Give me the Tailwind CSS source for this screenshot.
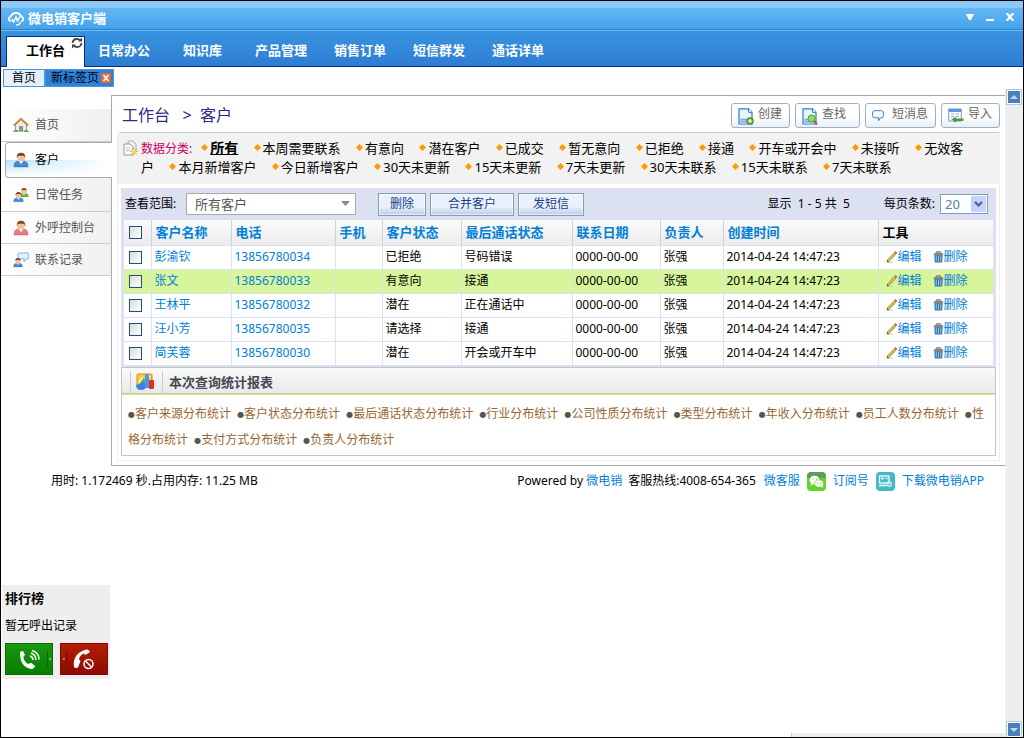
<!DOCTYPE html>
<html lang="zh-CN">

<head>
  <meta charset="UTF-8" />
  <meta name="viewport" content="width=device-width, initial-scale=1.0" />
  <title>微电销客户端</title>
  <script src="https://cdn.jsdelivr.net/npm/@tailwindcss/browser@4"></script>
</head>

<body class="h-screen flex flex-col overflow-hidden border border-black bg-white text-black text-xs font-['Noto_Sans','Noto_Sans_CJK_SC',sans-serif]">

  <!-- Icons used more than once -->
  <svg class="hidden">
    <symbol id="dot" viewBox="0 0 7 7"><path d="M3.5 0L7 3.5 3.5 7 0 3.5z" fill="#ff9900" /></symbol>
    <symbol id="pencil" viewBox="0 0 12 12">
      <path d="M1 11.5h6" stroke="#ccc" />
      <path d="M1.5 10.5L9.5 2" stroke="#8d7a2a" stroke-width="2.6" />
      <path d="M2 10L9.3 2.2" stroke="#ecd75c" stroke-width="1.3" />
      <path d="M9.2 2.3l1.3-1.4" stroke="#d8535a" stroke-width="2.4" />
      <path d="M.5 11.5l.8-2 1.2 1.2z" fill="#444" />
    </symbol>
    <symbol id="trash" viewBox="0 0 11 13">
      <path d="M3.5 2V.7h4V2" fill="none" stroke="#777" />
      <path d="M.5 4.2Q1 2 3 2h5q2 0 2.5 2.2z" fill="#8d9298" stroke="#666" stroke-width=".6" />
      <path d="M1 4.5h9L9.5 12.500h-8z" fill="#256da5" />
      <path d="M3 5.5v6M5.5 5.5v6M8 5.5v6" stroke="#b5dcf2" />
    </symbol>
    <symbol id="page" viewBox="0 0 16 17">
      <path d="M1 .8h9.5L14 4.3V16H1z" fill="#eaf4ff" stroke="#3579c6" stroke-width="1.2" />
      <path d="M10.5.8v3.5H14" fill="#fff" stroke="#3579c6" />
      <path d="M2 10.5h11v5H2z" fill="#a9cdf2" />
      <path d="M3 11.5h7M3 13.5h7" stroke="#7dabdd" />
    </symbol>
    <symbol id="man" viewBox="0 0 16 16">
      <path d="M1 15q-.5-5.5 4.5-6h5q5 .5 4.5 6z" fill="currentColor" stroke="#0003" />
      <path d="M5.5 9L8 12l2.5-3z" fill="#fff" />
      <circle cx="8" cy="5.5" r="4" fill="#f3c49a" />
      <path d="M3.7 6Q3.5.8 8 .8T12.3 6Q11.5 3.8 10 3.8H6Q4.5 3.8 3.7 6z" fill="#7b4523" />
    </symbol>
  </svg>

  <!-- Title bar -->
  <header class="shrink-0">
    <div class="h-[7px] bg-[#8cc8f8]"></div>
    <div class="h-[21px] flex items-center bg-linear-to-b from-[#63b7f3] to-[#43a3ea] pl-[7px] pr-[9px]">
      <svg class="w-4 h-4" viewBox="0 0 16 14" fill="none" stroke="#fff">
        <path d="M2.5 5Q4 1 8 1t5.5 4" stroke-width="1.8" />
        <path d="M3 4.5Q.8 5 .8 7T3 9.5M13 4.5q2.2.5 2.200 2.500T13 9.500" stroke-width="1.6" />
        <path d="M3.5 7l2 3 2.5-5 1.500 4 2.500-4.500M8 13q4 0 4.500-3" stroke-width="1.5" />
      </svg>
      <h1 class="ml-1 text-[13px] font-bold text-white">微电销客户端</h1>
      <div class="ml-auto flex gap-3">
        <button class="-mt-1" aria-label="菜单"><svg class="w-2 h-2" viewBox="0 0 8 8"><path d="M0 1h8L5 7H3z" fill="#fff" /></svg></button>
        <button class="-mt-1" aria-label="最小化"><svg class="w-2 h-2" viewBox="0 0 8 8"><path d="M0 6h8v2H0z" fill="#fff" /></svg></button>
        <button class="-mt-1" aria-label="关闭"><svg class="w-2 h-2" viewBox="0 0 8 8"><path d="M.5 0l7 8M7.500 0l-7 8" stroke="#fff" stroke-width="2.200" /></svg></button>
      </div>
    </div>
    <div class="h-px bg-[#2584d2]"></div>
    <div class="h-px bg-[#78bced]"></div>
  </header>

  <!-- Main nav -->
  <nav class="h-9 shrink-0 flex items-end border-b border-[#00317b] bg-linear-to-b from-[#3994e0] to-[#2e7dd3] pl-[5px] text-[13px] font-bold text-white">
    <a href="#" class="relative -mb-px w-[79px] h-[31px] border border-b-0 border-[#00317b] bg-white pl-[19px] leading-[26px] text-black">工作台
      <svg class="absolute right-px top-0 w-3 h-3" viewBox="0 0 12 12" fill="none" stroke="#444" stroke-width="1.8">
        <path d="M1.5 6Q2 2 6 2q2 0 3.500 1.500M10.500 6Q10 10 6 10q-2 0-3.500-1.500" />
        <path d="M11 .5V4.500H7zM1 11.500V7.500h4z" fill="#444" stroke="none" />
      </svg>
    </a>
    <div class="flex gap-[27px] pl-[13px] leading-[28px] pb-0.5">
      <a href="#" class="mr-[6px]">日常办公</a>
      <a href="#" class="mr-[6px]">知识库</a>
      <a href="#">产品管理</a>
      <a href="#">销售订单</a>
      <a href="#">短信群发</a>
      <a href="#">通话详单</a>
    </div>
  </nav>

  <!-- Page tabs -->
  <div class="h-[22px] shrink-0 flex items-start pt-0.5 pl-0.5 leading-4">
    <a href="#" class="border border-[#4a98dc] bg-[#e4effd] px-2">首页</a>
    <span class="flex items-center border border-[#4a98dc] bg-[#2f82d9] pl-[5px] pr-0.5">新标签页
      <button class="ml-0.5" aria-label="关闭标签">
        <svg class="w-[10px] h-[10px]" viewBox="0 0 10 10"><path d="M0 0h10v10H0z" fill="#f2662b" /><path d="M2.500 2l5 6M7.500 2l-5 6" stroke="#fff" stroke-width="1.800" /></svg>
      </button>
    </span>
  </div>

  <div class="flex-1 min-h-0 flex">
    <div class="flex-1 min-w-0 flex flex-col">

      <div class="flex mt-[6px]">
        <!-- Sidebar -->
        <aside class="w-[111px] shrink-0 flex flex-col text-[#555]">
          <div class="h-[14px] border-r border-[#a8a8a8]"></div>
          <a href="#" class="h-[33px] flex items-center gap-[6px] border-r border-b border-r-[#a8a8a8] border-b-[#ccc] bg-linear-to-r from-white to-[#f0f0f0] pl-3">
            <svg class="w-4 h-4" viewBox="0 0 16 16">
              <path d="M2.500 7.500L8 2.500l5.500 5V14h-11z" fill="#f3ead9" stroke="#a59a86" />
              <path d="M.8 8.500L8 1.800l7.200 6.700" fill="none" stroke="#c08b4c" stroke-width="2" />
              <path d="M6 9h4v5.500H6z" fill="#8295a9" />
              <path d="M0 15q2-4 5-1v1zM11 14q3-3 5 1h-5z" fill="#65b043" />
            </svg>首页</a>
          <a href="#" class="ml-1 h-9 flex items-center gap-[6px] rounded-l border border-r-0 border-[#a8a8a8] bg-[linear-gradient(to_right,transparent,white),linear-gradient(to_bottom,white_50%,#b6e3fb_50%,white)] pl-[7px] text-black">
            <svg class="w-4 h-4 text-[#3f8be0]"><use href="#man" /></svg>客户</a>
          <a href="#" class="h-[34px] flex items-center gap-[6px] border-r border-b border-r-[#a8a8a8] border-b-[#ccc] bg-linear-to-r from-white to-[#f0f0f0] pl-3">
            <svg class="w-4 h-4" viewBox="0 0 16 16">
              <g class="text-[#6cb555]"><use href="#man" x="6" y="0" width="10" height="11" /></g>
              <g class="text-[#3f8be0]"><use href="#man" x="0" y="4" width="11" height="12" /></g>
            </svg>日常任务</a>
          <a href="#" class="h-8 flex items-center gap-[6px] border-r border-b border-r-[#a8a8a8] border-b-[#ccc] bg-linear-to-r from-white to-[#f0f0f0] pl-3">
            <svg class="w-4 h-4 text-[#ee7c7c]"><use href="#man" /></svg>外呼控制台</a>
          <a href="#" class="h-8 flex items-center gap-[6px] border-r border-b border-r-[#a8a8a8] border-b-[#ccc] bg-linear-to-r from-white to-[#f0f0f0] pl-3">
            <svg class="w-4 h-4" viewBox="0 0 16 16">
              <path d="M6 1h9q.7 0 .7 1v4q0 1-1 1H13l-2 3V7H6q-1 0-1-1V2q0-1 1-1z" fill="#e1f0fd" stroke="#86b3dc" />
              <g class="text-[#3f8be0]"><use href="#man" x="0" y="5" width="10" height="11" /></g>
            </svg>联系记录</a>
          <div class="flex-1 border-r border-[#a8a8a8]"></div>
        </aside>

        <!-- Content panel -->
        <main class="flex-1 min-w-0 border-y border-[#a8a8a8] pb-1">
          <div class="h-9 flex items-start justify-between pl-[10px] pr-[5px] pt-[7px]">
            <h2 class="text-base leading-6 text-[#2b2b85] whitespace-pre">工作台   &gt;  客户</h2>
            <div class="flex gap-[5px] leading-5 text-[#666]">
              <button class="h-[25px] flex rounded-[3px] border border-[#a3b0bb] bg-linear-to-b from-white from-50% to-[#e6f0f6] pl-[6px] pr-[7px]">
                <svg class="mt-1 mr-1 w-4 h-[17px]" viewBox="0 0 16 17"><use href="#page" /><circle cx="12" cy="13" r="3.500" fill="#6aa83c" stroke="#3f7a1d" stroke-width=".6" /><path d="M12 11v4M10 13h4" stroke="#fff" stroke-width="1.200" /></svg>创建</button>
              <button class="h-[25px] flex rounded-[3px] border border-[#a3b0bb] bg-linear-to-b from-white from-50% to-[#e6f0f6] pl-[6px] pr-[13px]">
                <svg class="mt-1 mr-1 w-4 h-[17px]" viewBox="0 0 16 17"><use href="#page" /><path d="M12 13l3 3.500" stroke="#a0622d" stroke-width="2" /><circle cx="9.500" cy="10.500" r="3.500" fill="#8fe05a" stroke="#4aa32a" /></svg>查找</button>
              <button class="h-[25px] flex rounded-[3px] border border-[#a3b0bb] bg-linear-to-b from-white from-50% to-[#e6f0f6] pl-[6px] pr-[7px]">
                <svg class="mt-[6px] mr-2 w-3 h-3" viewBox="0 0 12 12"><path d="M2.500.7h7Q11.400.7 11.400 3v2.500q0 2.300-1.900 2.300H8.500l-2 3V7.800h-4Q.6 7.800.6 5.500V3Q.6.7 2.500.7z" fill="#f4faff" stroke="#3c82c8" /></svg>短消息</button>
              <button class="h-[25px] flex rounded-[3px] border border-[#a3b0bb] bg-linear-to-b from-white from-50% to-[#e6f0f6] pl-[6px] pr-[7px]">
                <svg class="mt-1 mr-1 w-4 h-4" viewBox="0 0 16 16"><path d="M.7 1h12.600v12H.7z" fill="#fff" stroke="#6a9edb" /><path d="M1 1h12v3H1z" fill="#5d96da" /><path d="M3 6h3M8 6h3M3 8.500h3M8 8.500h3M3 11h3" stroke="#86b1e3" stroke-width="1.200" /><path d="M4 11.500L8 8.500v2h7.500v2.500H8v2z" fill="#4b9a35" /></svg>导入</button>
            </div>
          </div>

          <div class="mx-[5px] rounded-tl border border-[#eee] border-t-[#c5d1d1] pb-[4px]">
            <!-- Filters -->
            <div class="flex bg-[#f2f2f2] pl-[5px] pr-8 pt-[6px] pb-[7px] text-[13px] leading-[19px]">
              <svg class="mt-px mr-[2px] w-4 h-4 shrink-0" viewBox="0 0 16 16">
                <path d="M5 1h5l3 3v8H5z" fill="#eee" stroke="#aaa" /><path d="M1 4h6l3 3v8H1z" fill="#fafafa" stroke="#999" /><path d="M3 8h4M3 10.500h4" stroke="#bbb" />
                <path d="M11 7.500v8M7 11.500h8M8.200 8.700l5.600 5.600M13.800 8.700l-5.600 5.600" stroke="#f6b52b" /><circle cx="11" cy="11.500" r="1.600" fill="#ffe96b" />
              </svg>
              <div class="flex-1 [&_svg]:inline [&_svg]:w-[7px] [&_svg]:h-[7px] [&_svg]:mb-1 [&_svg]:mr-0.5 [&_a]:ml-3">
                <span class="text-xs text-[#cc0066]">数据分类:</span><a href="#" class="!ml-[9px]"><svg><use href="#dot" /></svg><b class="text-sm leading-4 underline">所有</b></a>
                <a href="#"><svg><use href="#dot" /></svg>本周需要联系</a>
                <a href="#"><svg><use href="#dot" /></svg>有意向</a>
                <a href="#"><svg><use href="#dot" /></svg>潜在客户</a>
                <a href="#"><svg><use href="#dot" /></svg>已成交</a>
                <a href="#"><svg><use href="#dot" /></svg>暂无意向</a>
                <a href="#"><svg><use href="#dot" /></svg>已拒绝</a>
                <a href="#"><svg><use href="#dot" /></svg>接通</a>
                <a href="#"><svg><use href="#dot" /></svg>开车或开会中</a>
                <a href="#"><svg><use href="#dot" /></svg>未接听</a>
                <a href="#"><svg><use href="#dot" /></svg>无效客户</a>
                <a href="#"><svg><use href="#dot" /></svg>本月新增客户</a>
                <a href="#"><svg><use href="#dot" /></svg>今日新增客户</a>
                <a href="#"><svg><use href="#dot" /></svg>30天未更新</a>
                <a href="#"><svg><use href="#dot" /></svg>15天未更新</a>
                <a href="#"><svg><use href="#dot" /></svg>7天未更新</a>
                <a href="#"><svg><use href="#dot" /></svg>30天未联系</a>
                <a href="#"><svg><use href="#dot" /></svg>15天未联系</a>
                <a href="#"><svg><use href="#dot" /></svg>7天未联系</a>
              </div>
            </div>

            <!-- List -->
            <div class="mx-[3px] mt-1 bg-[#dbe1f1] px-[3px] pb-px">
              <div class="h-8 flex items-center">
                <label for="range" class="ml-px w-[61px]">查看范围:</label>
                <div class="relative">
                  <select id="range" class="block w-[170px] h-[22px] appearance-none border border-[#aaa] bg-white pl-2 text-[13px] leading-5 text-[#555]">
                    <option>所有客户</option>
                  </select>
                  <svg class="absolute right-[6px] top-2 w-[9px] h-[6px] pointer-events-none" viewBox="0 0 9 6"><path d="M0 0h9L4.500 5z" fill="#888" /></svg>
                </div>
                <div class="ml-[22px] flex gap-1 text-[#15428b]">
                  <button class="h-[23px] border border-[#7f9db9] bg-linear-to-b from-[#eaf1fa] from-60% to-[#b9cde6] px-[11px] leading-5 ring-1 ring-inset ring-white/60">删除</button>
                  <button class="h-[23px] border border-[#7f9db9] bg-linear-to-b from-[#eaf1fa] from-60% to-[#b9cde6] px-[17px] leading-5 ring-1 ring-inset ring-white/60">合并客户</button>
                  <button class="h-[23px] border border-[#7f9db9] bg-linear-to-b from-[#eaf1fa] from-60% to-[#b9cde6] px-[14px] leading-5 ring-1 ring-inset ring-white/60">发短信</button>
                </div>
                <span class="ml-auto whitespace-pre">显示  1 - 5 共  5</span>
                <label for="size" class="ml-[34px] mr-[5px]">每页条数:</label>
                <div class="relative mr-[5px]">
                  <select id="size" class="block w-12 h-5 appearance-none border border-[#7f9db9] bg-white pl-1 text-[13px] leading-[18px] text-[#5580b0]">
                    <option>20</option>
                  </select>
                  <svg class="absolute right-0.5 top-0.5 w-[15px] h-4 pointer-events-none" viewBox="0 0 15 16"><rect width="15" height="16" rx="1" fill="#c3d3fb" /><path d="M4 6l3.500 3.500L11 6" fill="none" stroke="#4d6185" stroke-width="2.200" /></svg>
                </div>
              </div>

              <table class="w-full table-fixed border-collapse text-left leading-4 [&_td]:h-6 [&_td]:bg-inherit [&_td]:border-b [&_td]:border-[#dbe1f1] [&_td+td]:border-l [&_td+td]:pl-[3px] [&_th]:h-[25px] [&_th]:border-b [&_th]:border-[#dbe1f1] [&_th+th]:border-l [&_th+th]:border-l-[#ccd0d8] [&_th+th]:pl-1 [&_th]:bg-linear-to-b [&_th]:from-[#fafafa] [&_th]:to-[#ebebeb] [&_th]:text-[13px] [&_input]:block [&_input]:ml-[5px] [&_input]:w-[13px] [&_input]:h-[13px] [&_input]:appearance-none [&_input]:border [&_input]:border-[#1c5180] [&_input]:bg-linear-to-br [&_input]:from-[#dcdcd7] [&_input]:to-white [&_tbody_a]:text-[#0080d8] [&_td_svg]:inline [&_td_svg]:h-3 [&_td_svg]:align-[-2px]">
                <colgroup>
                  <col class="w-[27px]"><col class="w-[80px]"><col class="w-[104px]"><col class="w-[47px]"><col class="w-[79px]"><col class="w-[111px]"><col class="w-[88px]"><col class="w-[63px]"><col class="w-[155px]"><col>
                </colgroup>
                <thead class="text-[#0080d8]">
                  <tr>
                    <th><input type="checkbox" aria-label="全选"></th>
                    <th>客户名称</th>
                    <th>电话</th>
                    <th>手机</th>
                    <th>客户状态</th>
                    <th>最后通话状态</th>
                    <th>联系日期</th>
                    <th>负责人</th>
                    <th>创建时间</th>
                    <th class="text-black">工具</th>
                  </tr>
                </thead>
                <tbody>
                  <tr class="bg-white">
                    <td><input type="checkbox" aria-label="彭渝钦"></td>
                    <td><a href="#">彭渝钦</a></td>
                    <td><a href="#">13856780034</a></td>
                    <td></td>
                    <td>已拒绝</td>
                    <td>号码错误</td>
                    <td>0000-00-00</td>
                    <td>张强</td>
                    <td>2014-04-24 14:47:23</td>
                    <td class="whitespace-nowrap"><a href="#" class="ml-1"><svg class="w-3"><use href="#pencil" /></svg>编辑</a><a href="#" class="ml-[11px]"><svg class="w-[11px]"><use href="#trash" /></svg>删除</a></td>
                  </tr>
                  <tr class="bg-[#d7f59b]">
                    <td><input type="checkbox" aria-label="张文"></td>
                    <td><a href="#">张文</a></td>
                    <td><a href="#">13856780033</a></td>
                    <td></td>
                    <td>有意向</td>
                    <td>接通</td>
                    <td>0000-00-00</td>
                    <td>张强</td>
                    <td>2014-04-24 14:47:23</td>
                    <td class="whitespace-nowrap"><a href="#" class="ml-1"><svg class="w-3"><use href="#pencil" /></svg>编辑</a><a href="#" class="ml-[11px]"><svg class="w-[11px]"><use href="#trash" /></svg>删除</a></td>
                  </tr>
                  <tr class="bg-white">
                    <td><input type="checkbox" aria-label="王林平"></td>
                    <td><a href="#">王林平</a></td>
                    <td><a href="#">13856780032</a></td>
                    <td></td>
                    <td>潜在</td>
                    <td>正在通话中</td>
                    <td>0000-00-00</td>
                    <td>张强</td>
                    <td>2014-04-24 14:47:23</td>
                    <td class="whitespace-nowrap"><a href="#" class="ml-1"><svg class="w-3"><use href="#pencil" /></svg>编辑</a><a href="#" class="ml-[11px]"><svg class="w-[11px]"><use href="#trash" /></svg>删除</a></td>
                  </tr>
                  <tr class="bg-white">
                    <td><input type="checkbox" aria-label="汪小芳"></td>
                    <td><a href="#">汪小芳</a></td>
                    <td><a href="#">13856780035</a></td>
                    <td></td>
                    <td>请选择</td>
                    <td>接通</td>
                    <td>0000-00-00</td>
                    <td>张强</td>
                    <td>2014-04-24 14:47:23</td>
                    <td class="whitespace-nowrap"><a href="#" class="ml-1"><svg class="w-3"><use href="#pencil" /></svg>编辑</a><a href="#" class="ml-[11px]"><svg class="w-[11px]"><use href="#trash" /></svg>删除</a></td>
                  </tr>
                  <tr class="bg-white">
                    <td><input type="checkbox" aria-label="简芙蓉"></td>
                    <td><a href="#">简芙蓉</a></td>
                    <td><a href="#">13856780030</a></td>
                    <td></td>
                    <td>潜在</td>
                    <td>开会或开车中</td>
                    <td>0000-00-00</td>
                    <td>张强</td>
                    <td>2014-04-24 14:47:23</td>
                    <td class="whitespace-nowrap"><a href="#" class="ml-1"><svg class="w-3"><use href="#pencil" /></svg>编辑</a><a href="#" class="ml-[11px]"><svg class="w-[11px]"><use href="#trash" /></svg>删除</a></td>
                  </tr>
                </tbody>
              </table>
            </div>

            <!-- Reports -->
            <section class="mx-[3px] border border-[#c4c4c4]">
              <div class="h-[26px] flex items-end border-b border-[#c4c4c4] bg-linear-to-b from-[#fafafa] to-[#e9e9e9] pl-2">
                <div class="h-[22px] w-[33px] flex items-center border-x border-[#ccc] pl-[5px]">
                  <svg class="w-[18px] h-[18px]" viewBox="0 0 18 18">
                    <rect x="1" y="1" width="15" height="13" rx="1" fill="#f9c93c" stroke="#e08b1d" />
                    <path d="M3 9l4-4 3 3 4-5" fill="none" stroke="#fff5b5" stroke-width="2" />
                    <path d="M0 12q6-1 6-5l5 5q-1 5-6 5t-5-5z" fill="#3c7fe6" /><path d="M5 9l3-5 2 6z" fill="#51b54a" />
                    <rect x="9" y="1" width="4" height="14" rx="1.500" fill="#4b93f2" /><rect x="13" y="7" width="5" height="9" rx="1" fill="#dd2d2a" />
                  </svg>
                </div>
                <h3 class="pl-[6px] text-[13px] font-bold leading-[22px] text-[#444a50]">本次查询统计报表</h3>
              </div>
              <div class="border-t border-[#d5ee6f] px-[6px] pt-[6px] pb-[2px] leading-[26px] text-[#996633] [&_i]:not-italic [&_i]:text-[8px] [&_i]:leading-none [&_i]:align-[1px] [&_i]:text-[#555] [&_i]:font-['DejaVu_Sans'] [&_a]:mr-[3px]">
                <a href="#"><i>●</i>客户来源分布统计</a>
                <a href="#"><i>●</i>客户状态分布统计</a>
                <a href="#"><i>●</i>最后通话状态分布统计</a>
                <a href="#"><i>●</i>行业分布统计</a>
                <a href="#"><i>●</i>公司性质分布统计</a>
                <a href="#"><i>●</i>类型分布统计</a>
                <a href="#"><i>●</i>年收入分布统计</a>
                <a href="#"><i>●</i>员工人数分布统计</a>
                <a href="#"><i>●</i>性格分布统计</a>
                <a href="#"><i>●</i>支付方式分布统计</a>
                <a href="#"><i>●</i>负责人分布统计</a>
              </div>
            </section>
          </div>
        </main>
      </div>

      <!-- Footer -->
      <footer class="h-[31px] shrink-0 flex items-center justify-between pl-[50px] pr-[21px]">
        <span>用时: 1.172469 秒.占用内存: 11.25 MB</span>
        <div class="flex items-center [&_a]:text-[#0080d8]">
          <span>Powered by <a href="#">微电销</a></span>
          <span class="ml-[6px]">客服热线:4008-654-365</span>
          <a href="#" class="ml-2">微客服</a>
          <svg class="mx-[7px] w-[19px] h-[19px]" viewBox="0 0 19 19">
            <rect width="19" height="19" rx="4" fill="#62d32c" /><path d="M0 5q0-5 5-5h9q5 0 5 5v1H0z" fill="#5f9d57" />
            <ellipse cx="7.500" cy="8" rx="5" ry="4.300" fill="#fff" /><ellipse cx="12" cy="11.500" rx="4.500" ry="3.700" fill="#fff" stroke="#62d32c" stroke-width=".7" />
            <path d="M4 11l-.5 2.500L7 12zM14 14l2 2v-3z" fill="#fff" /><path d="M5.500 7h1M9 7h1M10.200 11h1M13 11h1" stroke="#5fb742" />
          </svg>
          <a href="#">订阅号</a>
          <svg class="mx-[7px] w-[19px] h-[19px]" viewBox="0 0 19 19">
            <rect width="19" height="19" rx="4" fill="#43b8c6" /><rect x="3.500" y="4" width="9.500" height="7" fill="none" stroke="#fff" stroke-width="1.300" />
            <path d="M5 6.500h3M9.500 6.500h2M3 13.500h7" stroke="#fff" stroke-width="1.400" /><circle cx="13" cy="12" r="3" fill="#c9edf1" /><path d="M11.500 12l1.300 1.300L15 11" fill="none" stroke="#43b8c6" />
          </svg>
          <a href="#">下载微电销APP</a>
        </div>
      </footer>

      <!-- Call box -->
      <section class="mt-auto mb-[54px] ml-px w-[108px] h-[94px] shrink-0 bg-[#eee] pl-[3px] pr-0.5 leading-[27px]">
        <h3 class="font-bold text-[13px]">排行榜</h3>
        <p class="pb-1">暂无呼出记录</p>
        <div class="flex justify-between">
          <button aria-label="拨打" class="w-12 h-8 flex items-center justify-center border border-[#0a6d05] bg-linear-to-b from-[#159a0c] to-[#0a7d04]">
            <svg class="w-[46px] h-[30px]" viewBox="0 0 46 30">
              <path d="M14 9q0-2 3-2l2 4q-2 1-1.500 3 1 4 5 6 1.500-1.500 3-1l3.500 3q-.5 3-4 3-11-2-11-16z" fill="#fff" />
              <path d="M24 12q3 1 3 4M25 9q5 2 5 7M26 6.500q7 2 7 9" fill="none" stroke="#fff" stroke-width="1.500" />
              <path d="M41.500 7v16" stroke="#0a6504" /><path d="M43.500 13.500l2 1.500-2 1.500z" fill="#9bdc92" />
            </svg>
          </button>
          <button aria-label="挂断" class="w-12 h-8 flex items-center justify-center border border-[#7d0d02] bg-linear-to-b from-[#b41e04] to-[#8d0a03]">
            <svg class="w-[46px] h-[30px]" viewBox="0 0 46 30">
              <path d="M5.500 7v16" stroke="#7a0a02" /><path d="M3.500 13.500l-2 1.500 2 1.500z" fill="#e89a8a" />
              <path d="M13 23q-2-13 12-17.500 3-.5 4 2.500l-4.500 3-2-1.500q-4 2-4.500 6l1.500 1.500-2.500 6.500q-3 1-4-.5z" fill="#fff" />
              <circle cx="27.500" cy="20" r="4.500" fill="none" stroke="#fff" stroke-width="1.500" /><path d="M24.500 17l6 6" stroke="#fff" stroke-width="1.500" />
            </svg>
          </button>
        </div>
      </section>
      <div class="h-[4px] shrink-0 w-[214px] ml-auto border-l border-[#ccc] bg-[#eee]"></div>
    </div>

    <!-- Scrollbar -->
    <div class="w-[18px] shrink-0 flex flex-col justify-between border-r border-[#f6f6f6] bg-[#eee] pl-px">
      <button aria-label="向上" class="w-4 h-4 border border-[#a9cbe3] bg-[#4a80b8] ring-1 ring-inset ring-white"><svg class="mx-auto w-2 h-1" viewBox="0 0 8 4"><path d="M4 0l4 4H0z" fill="#c3d9ea" /></svg></button>
      <button aria-label="向下" class="w-4 h-4 border border-b-0 border-[#a9cbe3] bg-[#4a80b8] ring-1 ring-inset ring-white"><svg class="mx-auto w-2 h-1" viewBox="0 0 8 4"><path d="M4 4L0 0h8z" fill="#c3d9ea" /></svg></button>
    </div>
  </div>
</body>

</html>
